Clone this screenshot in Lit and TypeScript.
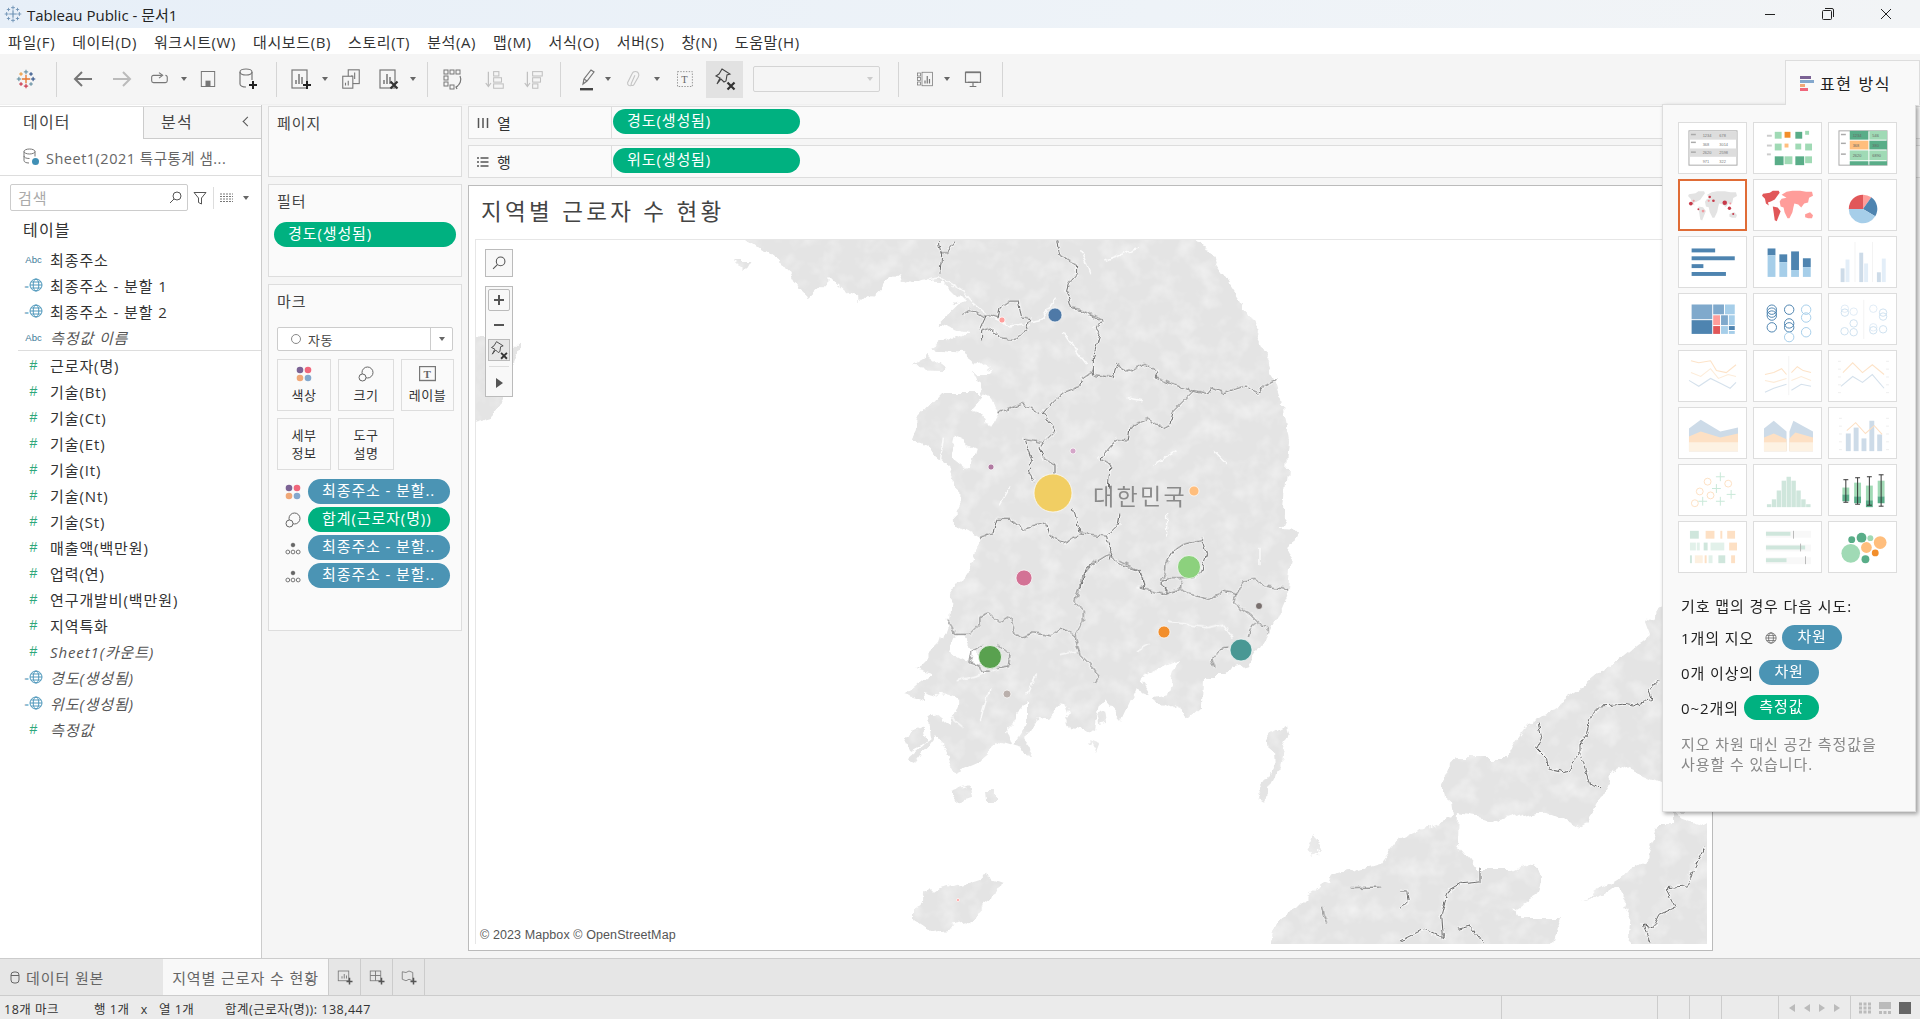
import { LitElement, html, svg, css } from "lit";
import { customElement } from "lit/decorators.js";

const BLUE = "#4e84b0";
const LBLUE = "#a6cee9";

// ---------- small icon helpers ----------
const plus = (x: number, y: number, s: number, c: string, w = 1.2) =>
  svg`<path d="M${x - s} ${y}H${x + s}M${x} ${y - s}V${y + s}" stroke=${c} stroke-width=${w} fill="none"/>`;

const logo = (size: number, muted = false) => {
  const c = (v: string) => (muted ? "#6f93b5" : v);
  return html`<svg width=${size} height=${size} viewBox="0 0 24 24">
    ${plus(12, 12, 5, c("#e8762d"), 1.6)}${plus(12, 3.5, 2.6, c("#5b879b"))}${plus(12, 20.5, 2.6, c("#c72037"))}
    ${plus(3.5, 12, 2.6, c("#59879b"))}${plus(20.5, 12, 2.6, c("#1f447e"))}${plus(6, 6, 2.2, c("#eb912b"))}
    ${plus(18, 6, 2.2, c("#1f447e"))}${plus(6, 18, 2.2, c("#c72037"))}${plus(18, 18, 2.2, c("#5b879b"))}
  </svg>`;
};

const ico = (w: number, body: unknown, stroke = "#777") => html`<svg width=${w} height=${w} viewBox="0 0 24 24" fill="none"
  stroke=${stroke} stroke-width="1.2">${body}</svg>`;

const chart = svg`<rect x="4" y="3" width="15" height="18"/><path d="M8 17v-4M11 17V7M14 17v-7" stroke-width="1.5"/>`;
const xmark = (x: number, y: number, s = 3.5) =>
  svg`<path d="M${x - s} ${y - s}L${x + s} ${y + s}M${x + s} ${y - s}L${x - s} ${y + s}" stroke="#333" stroke-width="2.2"/>`;
const pinPath = svg`<path d="M9 2l8 5-3 1 -1 6 -2 1 -3-3 -4 5 3-6 -4-2 3-2z" stroke="#444" stroke-width="1.1"/>`;

const icons: Record<string, unknown> = {
  back: ico(24, svg`<path d="M21 12H5M11 5l-7 7 7 7" stroke-width="2"/>`),
  fwd: ico(24, svg`<path d="M3 12h16M13 5l7 7-7 7" stroke-width="2"/>`, "#bbb"),
  redo: ico(22, svg`<path d="M15 8H6a2 2 0 0 0-2 2v4a2 2 0 0 0 2 2h13a2 2 0 0 0 2-2v-4a2 2 0 0 0-2-2"/><path d="M12 5l4 3-4 3"/>`),
  save: ico(20, svg`<rect x="4" y="3" width="16" height="18"/><rect x="9" y="14" width="6" height="7" fill="#777" stroke="none"/>`),
  newds: ico(24, svg`<ellipse cx="11" cy="5" rx="6" ry="3"/><path d="M5 5v12a6 3 0 0 0 6 3M17 5v8"/><path d="M18 14v8M14 18h8" stroke="#222" stroke-width="2"/>`),
  newsheet: ico(24, svg`${chart}<path d="M19 14v8M15 18h8" stroke="#222" stroke-width="2"/>`),
  dup: ico(22, svg`<rect x="9" y="2" width="12" height="15"/><path d="M13 12V8M16 12V5"/><rect x="3" y="9" width="11" height="13" fill="#f5f5f5"/><path d="M6 19v-3M9 19v-5"/>`),
  clear: ico(24, svg`${chart}${xmark(18, 18)}`),
  swap: ico(24, svg`<g fill="none" stroke="#777" stroke-width="1"><rect x="3" y="3" width="4" height="4"/><rect x="9" y="3" width="4" height="4"/><rect x="15" y="3" width="4" height="4"/><rect x="3" y="9" width="4" height="4"/><rect x="3" y="15" width="4" height="4"/><rect x="9" y="18" width="4" height="4"/></g><path d="M19 9c2 4 0 9-4 11M17 19l-2 1 1 2" stroke-width="1.2"/>`),
  sortA: ico(21, svg`<path d="M5 3v16M2 16l3 4 3-4" stroke="#c0c0c0" stroke-width="1.4"/><g stroke="#c0c0c0"><rect x="11" y="3" width="6" height="5"/><rect x="11" y="10" width="9" height="5"/><rect x="11" y="17" width="11" height="5"/></g>`),
  sortD: ico(21, svg`<path d="M5 3v16M2 16l3 4 3-4" stroke="#c0c0c0" stroke-width="1.4"/><g stroke="#c0c0c0"><rect x="11" y="3" width="11" height="5"/><rect x="11" y="10" width="9" height="5"/><rect x="11" y="17" width="6" height="5"/></g>`),
  hl: ico(24, svg`<path d="M8 17l1-5 7-9 3 2-7 9z"/><path d="M9 12l3 2"/><rect x="5" y="21" width="13" height="2.4" fill="#444" stroke="none"/>`),
  clip: ico(22, svg`<path d="M9 19c-2 1-4 0-4-3l5-10c1-3 6-3 7 0 1 2 0 3-1 5l-4 7c-1 2-4 1-3-1l4-9"/>`, "#c4c4c4"),
  text: html`<svg width="21" height="21" viewBox="0 0 24 24"><rect x="4" y="3" width="17" height="17" fill="none" stroke="#888" stroke-dasharray="1.6 1.6"/><text x="12.5" y="16" font-size="12" text-anchor="middle" fill="#666" font-family="Liberation Serif">T</text></svg>`,
  pin: ico(24, svg`${pinPath}${xmark(18, 19, 3.5)}`),
  cards: ico(22, svg`<g stroke-width="1"><rect x="2" y="4" width="4" height="4"/><rect x="2" y="10" width="4" height="4"/><rect x="2" y="16" width="4" height="4"/><rect x="8" y="3" width="14" height="18"/></g><path d="M12 18v-4M15 18V8M18 18v-6" stroke-width="1.6"/>`),
  present: ico(20, svg`<rect x="3" y="4" width="18" height="12" stroke-width="1.4"/><path d="M12 16v5M8 21h8M6 16h12" stroke-width="1.4"/><rect x="3" y="3" width="18" height="2" fill="#777" stroke="none"/>`),
};

const dd = html`<i class="dd"></i>`;
const sep = html`<i class="vsep"></i>`;
// each cell: width, content - widths add up to the icon positions in the toolbar
const toolbar: [number, unknown][] = [
  [52, logo(20)], [8, sep], [46, icons.back], [32, icons.fwd], [42, icons.redo], [8, dd], [40, icons.save],
  [38, icons.newds], [20, sep], [28, icons.newsheet], [22, dd], [30, icons.dup], [44, icons.clear], [6, dd],
  [22, sep], [30, icons.swap], [52, icons.sortA], [26, icons.sortD], [28, sep], [26, icons.hl], [16, dd],
  [36, icons.clip], [10, dd], [44, icons.text],
];

const globe = (c = "#3f8fb5", s = 14) => html`<svg width=${s} height=${s} viewBox="0 0 14 14" fill="none" stroke=${c} stroke-width=".9">
  <circle cx="7" cy="7" r="6"/><ellipse cx="7" cy="7" rx="2.8" ry="6"/><path d="M1 7h12M2 4h10M2 10h10"/></svg>`;

const sizeIcon = html`<svg width="16" height="16" viewBox="0 0 16 16" fill="none" stroke="#666"><circle cx="9.5" cy="6.5" r="5.5"/><circle cx="4.5" cy="11.5" r="3.5" fill="#fafafa"/></svg>`;
const colorIcon = html`<svg width="16" height="16" viewBox="0 0 16 16"><circle cx="4" cy="4" r="3.3" fill="#7b6294"/><circle cx="12" cy="4" r="3.3" fill="#f0677c"/><circle cx="4" cy="12" r="3.3" fill="#f0a878"/><circle cx="12" cy="12" r="3.3" fill="#84a8cd"/></svg>`;
const detailIcon = html`<svg width="16" height="14" viewBox="0 0 16 14" fill="none" stroke="#666" stroke-width=".9"><circle cx="8" cy="4" r="1.8" fill="#666"/><circle cx="2.8" cy="11" r="1.9"/><circle cx="8" cy="11" r="1.9"/><circle cx="13.2" cy="11" r="1.9"/></svg>`;

type Field = { name: string; kind: "abc" | "geo" | "num"; calc?: boolean };
const dims: Field[] = [
  { name: "최종주소", kind: "abc" },
  { name: "최종주소 - 분할 1", kind: "geo" },
  { name: "최종주소 - 분할 2", kind: "geo" },
  { name: "측정값 이름", kind: "abc", calc: true },
];
const measures: Field[] = [
  { name: "근로자(명)", kind: "num" }, { name: "기술(Bt)", kind: "num" }, { name: "기술(Ct)", kind: "num" },
  { name: "기술(Et)", kind: "num" }, { name: "기술(It)", kind: "num" }, { name: "기술(Nt)", kind: "num" },
  { name: "기술(St)", kind: "num" }, { name: "매출액(백만원)", kind: "num" }, { name: "업력(연)", kind: "num" },
  { name: "연구개발비(백만원)", kind: "num" }, { name: "지역특화", kind: "num" },
  { name: "Sheet1(카운트)", kind: "num", calc: true }, { name: "경도(생성됨)", kind: "geo", calc: true },
  { name: "위도(생성됨)", kind: "geo", calc: true }, { name: "측정값", kind: "num", calc: true },
];

const fieldIcon = (k: Field["kind"]) =>
  k === "abc" ? html`<span class="abc">Abc</span>` : k === "geo" ? html`<span class="geo"><b>=</b>${globe()}</span>` : html`<span class="num">#</span>`;

// ---------- show me thumbnails (68 x 51 boxes) ----------
const r = (x: number, y: number, w: number, h: number, c: string) => svg`<rect x=${x} y=${y} width=${w} height=${h} fill=${c}/>`;
const world = (a: string, b: string) => svg`
  <path fill=${a} d="M9 14l7-1 3-2 6 0 1 2-3 4-2 3-4 2-3 1 1 3-3-2-1-5-3-3z"/>
  <path fill=${a} d="M19 27l5 1 3 4-2 5-2 5-2-1-1-7z"/>
  <path fill=${b} d="M28 15l5-3 6-1 8 0 6 1 6 0 1 4-4 2-1 5-4 1-3 4-3-3-4-1-1 4-1 5-3 6-2 0-3-6-1-5-3-1-1-5 2-3 5-1z"/>
  <path fill=${b} d="M52 35l5-2 3 3-1 3-4 0-3-1z"/>`;
const lineSet = (...l: [string, string][]) => l.map(([d, c]) => svg`<polyline points=${d} fill="none" stroke=${c} stroke-width="1.1"/>`);

const thumbs: unknown[] = [
  // text table
  svg`<rect x="10" y="8" width="49" height="35" fill="#fff" stroke="#aaa"/>${r(10.5, 8.5, 48, 8.5, "#ddd")}${r(10.5, 26, 48, 8.5, "#ddd")}
    ${r(12, 11, 5, 1.5, "#aaa")}${r(12, 19, 5, 1.5, "#aaa")}${r(12, 29, 5, 1.5, "#aaa")}
    <g font-size="4" fill="#777" font-family="Liberation Sans"><text x="24" y="14.5">1234</text><text x="41" y="14.5">678</text><text x="24" y="23">368</text><text x="41" y="23">3014</text><text x="24" y="32">2620</text><text x="41" y="32">2598</text><text x="24" y="41">971</text><text x="41" y="41">322</text></g>`,
  // heat map
  svg`${r(13, 12, 5, 2, "#ccc")}${r(13, 22, 5, 2, "#ccc")}${r(13, 31, 4, 2, "#ccc")}
    ${r(21, 9, 7, 7, "#a0dab5")}${r(31, 9, 6, 6, "#f28e2b")}${r(42, 9, 7, 7, "#59ad88")}${r(52, 8, 4, 4, "#a0dab5")}
    ${r(21, 21, 7, 7, "#a0dab5")}${r(31, 21, 4, 4, "#ffbe7d")}${r(42, 21, 6, 6, "#a0dab5")}${r(52, 21, 7, 7, "#a0dab5")}
    ${r(21, 34, 9, 9, "#59ad88")}${r(31, 34, 8, 8, "#a0dab5")}${r(42, 34, 9, 9, "#59ad88")}${r(52, 34, 7, 7, "#a0dab5")}`,
  // highlight table
  svg`<rect x="10" y="8" width="49" height="35" fill="#fff" stroke="#aaa"/>${r(12, 11, 5, 1.5, "#aaa")}${r(12, 20, 5, 1.5, "#aaa")}${r(12, 31, 5, 1.5, "#aaa")}
    ${r(21, 8, 19, 9, "#59ad88")}${r(41, 8, 18, 9, "#a0dab5")}${r(21, 18, 19, 9, "#ffbe7d")}${r(41, 18, 18, 9, "#59ad88")}
    ${r(21, 28, 19, 10, "#a0dab5")}${r(41, 28, 18, 10, "#a0dab5")}${r(21, 39, 19, 4, "#59ad88")}${r(41, 39, 18, 4, "#59ad88")}
    <g font-size="4" fill="#666" font-family="Liberation Sans"><text x="24" y="14">1234</text><text x="44" y="14">546</text><text x="24" y="24">368</text><text x="44" y="24">380</text><text x="24" y="35">2620</text><text x="44" y="35">6890</text></g>`,
  // symbol map
  svg`${world("#e3e3e3", "#e3e3e3")}<g fill="#c73a4a"><circle cx="11" cy="24" r="2"/><circle cx="47" cy="23" r="2.4"/><circle cx="52" cy="29" r="1.8"/><circle cx="31" cy="17" r="1.4"/><circle cx="35" cy="21" r="1.4"/><circle cx="19" cy="30" r="1"/><circle cx="56" cy="35" r="1.1"/></g>
    <g fill="#ef9a9f"><circle cx="14" cy="21" r="1.2"/><circle cx="24" cy="32" r="1.5"/><circle cx="30" cy="21" r="1.2"/><circle cx="53" cy="24" r="1.1"/></g>`,
  // filled map
  world("#e15759", "#ff9d9a"),
  // pie
  svg`<path d="M34.5 15A14.5 14.5 0 0 0 20 29.5H34.5z" fill="#e15759"/>
    <path d="M34.5 15A14.5 14.5 0 0 1 43 17.7L34.5 29.5z" fill="#ff9d9a"/>
    <path d="M43 17.7A14.5 14.5 0 0 1 47 37L34.5 29.5z" fill=${BLUE}/>
    <path d="M47 37A14.5 14.5 0 0 1 20 29.5H34.5z" fill=${LBLUE}/>`,
  // horizontal bars
  svg`${r(12.7, 11.7, 24, 4, BLUE)}${r(12.7, 19.7, 44, 4, BLUE)}${r(12.7, 27.7, 12, 4, BLUE)}${r(12.7, 35.7, 35, 4, BLUE)}`,
  // stacked bars
  svg`${[[13.7, 11.7, 18.7], [25.7, 17.7, 25.7], [37.7, 14.7, 33.7], [49.7, 21.7, 30.7]].map(([x, t, m]) => svg`${r(x, t, 8, m - t, BLUE)}${r(x, m, 8, 40.7 - m, LBLUE)}`)}`,
  // side by side bars
  svg`${r(26, 5, .7, 41, "#eee")}${r(44, 5, .7, 41, "#eee")}
    ${r(11.7, 32, 4, 14, "#cddbe8")}${r(16.7, 23, 4, 23, "#e3eef8")}${r(30.7, 16, 4, 30, "#cddbe8")}${r(35.7, 27, 4, 19, "#e3eef8")}${r(48.7, 36, 4, 10, "#cddbe8")}${r(53.7, 22, 4, 24, "#e3eef8")}`,
  // treemap
  svg`${r(12.7, 10.7, 21, 15, "#7fa9cc")}${r(12.7, 26.7, 21, 14, BLUE)}${r(34.7, 10.7, 11, 10, "#7fa9cc")}${r(46.7, 10.7, 10, 10, LBLUE)}
    ${r(34.7, 21.7, 7, 10, "#ff9d9a")}${r(42.7, 21.7, 7, 10, "#7fa9cc")}${r(50.7, 21.7, 6, 10, LBLUE)}${r(34.7, 32.7, 7, 8, "#e15759")}
    ${r(42.7, 32.7, 7, 8, LBLUE)}${r(50.7, 32.7, 6, 4, BLUE)}${r(50.7, 37.7, 6, 3, LBLUE)}`,
  // circle view
  svg`<g fill="none" stroke-width="1">${[[18, 16], [18, 19], [18, 22], [18, 34], [35.7, 16], [35.7, 30], [35.7, 34]].map(([x, y]) => svg`<circle cx=${x} cy=${y} r="4.8" stroke=${BLUE}/>`)}
    ${[[53, 16], [53, 24], [53, 39], [35.7, 44]].map(([x, y]) => svg`<circle cx=${x} cy=${y} r="4.8" stroke=${LBLUE}/>`)}</g>`,
  // side by side circles
  svg`<g fill="none" stroke-width="1">${[[16, 15], [16, 19], [15.7, 38], [25, 18], [25, 30], [25, 39], [45, 15], [55, 19], [55, 23], [45, 34], [45, 37], [55, 36]].map(([x, y], i) => svg`<circle cx=${x} cy=${y} r="3.8" stroke=${i % 3 ? "#cfe1f0" : "#e0ecf6"}/>`)}</g>${r(35, 6, .7, 40, "#eee")}`,
  // lines
  svg`${lineSet(["12,10 20,12 32,10 38,20 48,22 58,14", "#fde3c8"], ["12,22 22,26 32,18 40,28 50,24 58,26", "#fdecd9"], ["10,30 20,36 32,28 44,34 52,38 58,32", "#d5e1ec"])}`,
  svg`${r(35, 5, .7, 40, "#eee")}${lineSet(["11,24 20,22 28,18 33,24", "#fde3c8"], ["38,22 44,16 50,20 58,22", "#fde3c8"], ["11,30 20,32 33,28", "#fdecd9"], ["38,30 48,26 58,30", "#fdecd9"], ["11,42 20,38 33,34", "#d5e1ec"], ["38,40 48,34 58,36", "#d5e1ec"])}`,
  svg`${lineSet(["14,22 24,12 34,22 44,14 56,24", "#fde3c8"], ["12,36 24,26 34,32 44,24 56,38", "#d5e1ec"])}<g fill="#eee">${[10, 18, 26, 34, 42].map((y) => svg`${r(9, y, 3, 1, "#eee")}${r(58, y, 3, 1, "#eee")}`)}</g>`,
  // areas
  svg`<polygon points="10,21 22,12 42,24 60,20 60,44 10,44" fill="#cddbe8"/><polygon points="10,29 22,24 42,30 60,26 60,44 10,44" fill="#fde0c4"/><polygon points="10,35 60,35 60,44 10,44" fill="#fdf2e3"/>`,
  svg`<polygon points="10,21 20,13 33,24 33,44 10,44" fill="#cddbe8"/><polygon points="10,30 20,26 33,32 33,44 10,44" fill="#fde0c4"/><polygon points="10,35 33,35 33,44 10,44" fill="#fdf2e3"/>
    <polygon points="36,24 40,13 60,24 60,44 36,44" fill="#cddbe8"/><polygon points="36,31 42,25 60,30 60,44 36,44" fill="#fde0c4"/><polygon points="36,35 60,35 60,44 36,44" fill="#fdf2e3"/>`,
  svg`${r(17, 26, 5, 18, "#cddbe8")}${r(25, 20, 5, 24, "#cddbe8")}${r(33, 31, 5, 13, "#cddbe8")}${r(41, 13, 5, 31, "#cddbe8")}${r(49, 27, 5, 17, "#cddbe8")}
    ${lineSet(["18,23 27,15 37,26 46,18 54,27", "#fde0c4"])}${[10, 18, 26, 34, 42].map((y) => svg`${r(10, y, 3, 1, "#eee")}${r(58, y, 3, 1, "#eee")}`)}`,
  // scatter
  svg`<g fill="none" stroke-width="1"><g stroke="#fde0c4">${[[29, 17], [21, 27], [16, 39], [32, 31], [50, 19]].map(([x, y]) => svg`<circle cx=${x} cy=${y} r="3.5"/>`)}</g>
    <g stroke="#c9e8d8">${[[42, 12], [38, 24], [24, 37], [42, 37], [53, 30]].map(([x, y]) => svg`<path d="M${x - 4.5} ${y}h9M${x} ${y - 4.5}v9"/>`)}</g></g>`,
  // histogram
  svg`${[[13, 3], [18, 8], [23, 17], [28, 27], [33, 31], [38, 27], [43, 17], [48, 8], [53, 3]].map(([x, h]) => svg`${r(x, 43 - h, 4.5, h, "#cfe6dc")}`)}`,
  // box plot
  svg`${[[17, 15, 38, 23, 30], [29, 13, 40, 18, 32], [41, 12, 41, 21, 36], [53, 10, 42, 16, 32]].map(([x, t, b, a, m]) => svg`
    ${r(x - 3.5, a, 7, m - a, "#a0dab5")}${r(x - 3.5, m, 7, 7, "#59ad88")}<path d="M${x} ${t}V${b}M${x - 2.5} ${t}h5M${x - 2.5} ${b}h5" stroke="#333" fill="none"/>`)}`,
  // gantt
  svg`${r(11, 9, 9, 8, "#cfe6dc")}${r(27, 9, 9, 8, "#fde0c4")}${r(42, 9, 2, 8, "#fde0c4")}${r(49, 9, 8, 8, "#fde0c4")}
    ${r(11, 21, 6, 8, "#e2f1ea")}${r(18, 21, 3, 8, "#e2f1ea")}${r(25, 21, 4, 8, "#cfe6dc")}${r(32, 21, 14, 8, "#e2f1ea")}${r(51, 21, 8, 8, "#fde0c4")}
    ${r(11, 34, 2, 8, "#cfe6dc")}${r(16, 34, 8, 8, "#fdf0e0")}${r(26, 34, 2, 8, "#fde0c4")}${r(30, 34, 4, 8, "#e2f1ea")}${r(40, 34, 7, 8, "#cfe6dc")}${r(53, 34, 4, 8, "#fde0c4")}`,
  // bullet
  svg`${r(12, 9, 46, 7, "#f8f8f8")}${r(12, 23, 46, 7, "#f8f8f8")}${r(12, 36, 46, 7, "#f8f8f8")}${r(12, 10, 25, 4, "#cfe6dc")}${r(12, 24, 40, 4, "#cfe6dc")}${r(12, 37, 21, 4, "#cfe6dc")}
    ${r(39.7, 9, .8, 8, "#aaa")}${r(47, 22, .8, 8, "#aaa")}${r(52, 35, .8, 8, "#aaa")}`,
  // packed bubbles
  svg`<circle cx="22" cy="32" r="9.5" fill="#a0dab5"/><circle cx="23" cy="18" r="3.5" fill="#59ad88"/><circle cx="33" cy="16" r="5" fill="#59ad88"/><circle cx="42" cy="16.5" r="3" fill="#a0dab5"/>
    <circle cx="38" cy="26" r="5.5" fill="#ffbe7d"/><circle cx="52" cy="21" r="6.5" fill="#ffbe7d"/><circle cx="47" cy="31.5" r="3.5" fill="#f28e2b"/><circle cx="37" cy="38" r="4" fill="#59ad88"/>`,
];
// the ones tableau greys out have their colours already pale; index 3 is the active one
const ACTIVE = 3;

// ---------- map data, traced from the picture ----------
const land = [
  // korea
  "745,225 1190,225 1240,300 1270,360 1283,400 1289,440 1284,510 1280,527 1298,528 1290,560 1286,595 1268,637 1250,665 1225,672 1205,672 1204,705 1190,718 1178,708 1160,700 1135,690 1122,718 1102,695 1095,732 1072,728 1063,700 1047,718 1035,716 1022,738 1035,755 1000,745 980,762 957,772 935,735 915,762 907,758 930,738 928,718 942,706 905,695 935,670 915,665 940,640 948,617 950,593 972,560 982,537 958,523 957,480 947,463 915,437 920,417 943,393 982,393 973,367 908,365 968,330 938,320 957,303 905,280 900,270 880,285 860,303 830,277 806,300 790,268 750,240",
  // china edge
  "465,340 522,342 503,397 490,417 465,424",
  // small islands
  "733,258 752,258 745,270", "950,793 970,786 972,796 955,800", "988,787 998,787 998,797 989,797",
  "1088,738 1098,742 1095,750", "905,735 920,728 925,742 910,750", "1098,716 1108,712 1110,724 1100,726",
  // jeju
  "915,907 933,890 980,875 1000,882 993,903 967,922 930,930 915,920",
  // tsushima
  "1287,720 1270,730 1273,767 1255,797 1263,800 1277,773 1289,733",
  "1313,837 1323,847 1313,853 1308,847",
  // japan
  "1665,605 1645,620 1650,633 1617,660 1580,690 1530,723 1507,757 1457,757 1443,770 1450,817 1423,827 1400,837 1380,863 1333,877 1307,893 1280,920 1268,955 1725,955 1725,605",
];
const sea = [
  "1458,812 1500,820 1540,808 1587,828 1597,800 1620,763 1670,785 1670,823 1660,823 1647,860 1580,900 1617,887 1633,910 1630,955 1548,955 1560,917 1523,917 1517,907 1540,893 1543,877 1533,860 1513,870 1480,870 1457,843",
  "1672,812 1712,828 1712,812",
  // inlets along the korean coast
  "905,280 945,280 965,300 935,310", "915,345 960,350 990,372 950,372", "985,393 1000,412 990,428 975,405", "955,435 975,445 968,470 950,455",
  "958,630 985,660 975,665 950,650", "925,690 960,700 950,725 930,710", "1005,725 1030,700 1030,718 1012,745", "1140,680 1180,660 1170,690 1150,695",
];
const rivers7 = [
  "0,170 60,150 120,140 190,180 215,210 260,250 330,285 420,270 470,200", "490,300 530,360 560,400", "290,545 260,500",
  "130,620 120,700 150,760", "680,500 730,510", "760,700 830,660", "940,660 980,700", "300,820 330,770", "610,90 720,50", "545,60 570,130",
  "800,850 800,920", "1080,950 1080,1000",
];
const rivers8 = [
  "170,360 240,340 300,320", "410,340 380,400", "800,180 920,200 970,190 1000,230", "710,270 750,250", "480,280 530,270",
  "120,440 190,500", "270,380 240,480",
];
const borders7 = [
  "470,30 480,70 530,100 530,130 505,160 500,180 515,230 540,235 610,270 585,290 600,310 580,380 580,430 640,440 650,400 680,420 735,400 775,420 765,440 820,460 880,480 920,490 935,470 970,485 1035,465 1075,490 1090,465 1130,445",
  "115,30 125,70 120,125", "165,35 140,65 120,65",
  "187,250 210,235 250,260 265,250 295,260 300,230 330,210 355,210 365,260 390,265 380,295 345,325 300,320 270,290 245,300 245,325", "240,295 260,250",
  "580,420 545,445 540,465 490,485 460,510 430,545 465,600 430,635 420,650 430,680 465,700 465,730", "295,545 365,520 420,545",
  "430,635 375,625 385,660 395,690 385,720 405,750", "520,830 540,905",
  "880,480 820,540 810,580 790,590 745,565 690,585 685,630 650,625 620,660 600,680 630,700 625,770", "660,850 655,880 620,915 570,910 540,905",
  "240,920 280,905 290,865 330,865 370,895 440,875 450,915 490,935 535,915", "620,915 630,965 625,985",
  "625,970 560,1010 540,1080", "625,970 660,1000 720,1020 735,1075",
  "800,990 820,960 850,940 905,925 920,970 905,1020 880,1040 840,1040 800,1040 785,1060 800,1080",
];
const borders8 = [
  "580,0 550,40 545,60 525,120 550,150 550,180 525,225", "660,0 720,30 735,75 720,80 790,100 840,85 845,60",
  "800,0 795,40 785,60 800,100", "845,80 870,100 930,115 970,90 1010,100 1000,125 1050,160 1075,185 1050,205 1045,230",
  "1010,100 1030,60 1065,55 1095,75 1160,85", "1075,190 1095,195 1105,215", "985,260 960,265 950,285 935,290 945,320",
  "140,175 155,195 165,220 210,220 240,190 240,165 265,155 300,185 330,165 345,220 365,230 400,215 455,225 480,205 500,205 525,225 540,280 585,325 595,350 585,365",
  "245,250 215,270 210,305 240,315 245,330 270,330", "295,250 330,280 325,315 290,320",
  "1355,980 1440,978", "1265,1035 1270,1060 1280,1085",
];
const borders10 = [
  "780,355 745,390 755,415 700,435 670,430 605,435 570,470 560,520 540,550 540,580 555,625 570,670 600,680",
  "415,485 425,530 410,560 440,590 445,625 490,635 510,630 525,590 540,570",
  "0,1140 70,1105 130,1130 125,1060 135,1020 150,985 185,965 240,960 240,920",
  "0,1045 25,1020 20,990 0,990", "175,1105 210,1095 250,1145",
  "750,1145 730,1095 760,1100 780,1060 825,1040 800,990 800,980 860,975 880,930 915,860",
];
const marks: [number, number, number, string][] = [
  [1053, 492, 19, "#f1ce63"], [1055, 314, 7, "#4e79a7"], [1002, 319, 3, "#ff9d9a"], [1073, 450, 3, "#d4a6c8"],
  [991, 466, 3, "#b07aa1"], [1194, 490, 5, "#ffbe7d"], [1189, 566, 11.5, "#8cd17d"], [1024, 577, 8, "#d37295"],
  [1259, 605, 3.5, "#79706e"], [1164, 631, 6, "#f28e2b"], [1241, 649, 11, "#499894"], [990, 656, 11.5, "#59a14f"],
  [1007, 693, 4, "#bab0ac"], [958, 899, 1.5, "#ff9d9a"],
];
const lines = (ls: string[], ox: number, oy: number) =>
  svg`<g transform="translate(${ox} ${oy}) scale(.3333)">${ls.map((p) => svg`<polyline points=${p} vector-effect="non-scaling-stroke"/>`)}</g>`;

@customElement("app-root")
export class AppRoot extends LitElement {
  static styles = css`
    :host {
      display: flex; flex-direction: column; position: relative; width: 1920px; height: 1019px; overflow: hidden;
      font-family: "Open Sans", "Noto Sans CJK KR", sans-serif; font-size: 15px; letter-spacing: .9px; color: #444; background: #f5f5f5;
    }
    .titlebar { height: 28px; display: flex; align-items: center; background: linear-gradient(90deg, #e7eff8, #eef3f8 60%, #f2f4f6); color: #222; flex: none; letter-spacing: 0; padding-right: 5px; }
    .titlebar .logo { width: 18px; height: 18px; margin: 0 5px 0 4px; display: flex; }
    .titlebar .name { flex: 1; }
    .winbtn { width: 58px; display: flex; justify-content: center; }
    .menubar { height: 26px; background: #fff; display: flex; align-items: center; padding-left: 8px; gap: 17px; color: #333; flex: none; letter-spacing: .6px; }
    .toolbar { height: 50px; display: flex; align-items: center; background: #f5f5f5; border-bottom: 1px solid #f0f0f0; flex: none; }
    .cell { display: flex; justify-content: center; align-items: center; height: 37px; flex: none; }
    .cell.on { background: #e2e2e2; }
    .combo { width: 127px; height: 26px; margin: 0 0 0 10px; border: 1px solid #d4d4d4; border-radius: 2px; box-sizing: border-box; position: relative; flex: none; }
    .combo .dd { position: absolute; right: 6px; top: 10px; border-top-color: #ccc; }
    .dd { display: block; width: 0; height: 0; border: 3px solid transparent; border-top: 4px solid #666; border-bottom: 0; }
    .vsep { display: block; width: 1px; height: 35px; background: #d5d5d5; }
    .main { height: 853px; display: flex; flex: none; }

    .data { width: 261px; background: #fff; border-right: 1px solid #ccc; flex: none; }
    .dtabs { display: flex; height: 33px; margin-top: 1px; border-top: 1px solid #ddd; box-sizing: border-box; }
    .dtab { width: 143px; font-size: 16px; letter-spacing: 1.2px; padding-left: 23px; box-sizing: border-box; line-height: 30px; }
    .dtab.off { flex: 1; background: #f5f5f5; border-left: 1px solid #ccc; border-bottom: 1px solid #ccc; padding-left: 17px; display: flex; justify-content: space-between; }
    .chev { width: 6px; height: 6px; border-left: 1px solid #555; border-bottom: 1px solid #555; transform: rotate(45deg); margin: 11px 10px 0 0; }
    .source { height: 37px; display: flex; align-items: center; gap: 6px; padding-left: 23px; border-bottom: 1px solid #ddd; box-sizing: border-box; color: #666; font-size: 14.5px; letter-spacing: .5px; white-space: nowrap; }
    .searchrow { display: flex; align-items: center; padding: 8px 0 0 10px; height: 27px; }
    .search { width: 178px; height: 27px; border: 1px solid #ccc; border-radius: 2px; box-sizing: border-box; display: flex; align-items: center; justify-content: space-between; padding: 0 5px 0 7px; color: #aaa; }
    .searchrow .vb { width: 1px; height: 22px; background: #ddd; margin: 0 6px; }
    .tblhead { font-size: 16px; letter-spacing: 1.2px; padding: 7px 0 4px 23px; line-height: 24px; color: #333; }
    .field { height: 26px; display: flex; align-items: center; padding-left: 23px; color: #333; white-space: nowrap; }
    .field .ic { width: 27px; flex: none; display: flex; justify-content: center; margin-left: -3px; margin-right: 3px; letter-spacing: 0; }
    .field.calc .nm { font-style: italic; color: #555; }
    .divider { height: 1px; background: #ddd; margin: 0 0 1px 18px; }
    .abc { font-size: 9.5px; color: #3c7a98; font-family: "Liberation Sans", sans-serif; }
    .geo { display: flex; align-items: center; }
    .geo b { font-size: 8px; color: #3f8fb5; font-weight: 400; }
    .num { color: #2ea77a; font-family: "Liberation Sans", sans-serif; font-size: 14px; }

    .cards { width: 194px; margin-left: 6px; display: flex; flex-direction: column; gap: 7px; padding-top: 1px; flex: none; }
    .card { background: #fafafa; border: 1px solid #ddd; box-sizing: border-box; padding: 6px 8px; color: #444; }
    .card h4 { margin: 0; font-weight: 400; font-size: 15px; line-height: 20px; }
    .pill { height: 25px; border-radius: 13px; color: #fff; line-height: 22px; padding-left: 14px; box-sizing: border-box; white-space: nowrap; overflow: hidden; }
    .pill.g { background: #00b180; }
    .pill.b { background: #4b94b4; }
    .filter .pill { margin: 11px -3px 0 -3px; }
    .mkcombo { height: 24px; margin-top: 16px; border: 1px solid #ccc; border-radius: 2px; background: #fff; display: flex; align-items: center; box-sizing: border-box; padding-left: 13px; gap: 7px; font-size: 13px; letter-spacing: .6px; }
    .ring { width: 8px; height: 8px; border: 1px solid #888; border-radius: 50%; }
    .mkcombo .end { margin-left: auto; width: 21px; height: 100%; border-left: 1px solid #ccc; display: flex; align-items: center; justify-content: center; }
    .mkbtns { display: grid; grid-template-columns: 54px 56px 53px; grid-auto-rows: 52px; gap: 7px; margin-top: 8px; }
    .mkbtn { border: 1px solid #ddd; display: flex; flex-direction: column; align-items: center; justify-content: center; font-size: 13px; letter-spacing: .6px; line-height: 18px; color: #333; text-align: center; background: #fafafa; }
    .mkbtn svg { margin-bottom: 4px; }
    .mkpills { margin-top: 9px; display: flex; flex-direction: column; gap: 3px; }
    .mkrow { display: flex; align-items: center; }
    .mkrow .slot { width: 31px; display: flex; justify-content: center; }
    .mkrow .pill { width: 142px; }

    .work { flex: 1; margin-left: 6px; display: flex; flex-direction: column; min-width: 0; padding-top: 1px; }
    .shelf { height: 33px; margin-bottom: 6px; border: 1px solid #ddd; border-right: 0; background: #fafafa; display: flex; box-sizing: border-box; }
    .shelf .lab { width: 143px; display: flex; align-items: center; gap: 8px; padding-left: 8px; border-right: 1px solid #ddd; box-sizing: border-box; flex: none; color: #333; }
    .shelf .pill { width: 187px; margin: 2px 0 0 1px; }
    .view { width: 1245px; height: 766px; margin-top: 1px; background: #fff; border: 1px solid #bbb; box-sizing: border-box; padding: 0 5px 6px 6px; display: flex; flex-direction: column; }
    .vtitle { font-size: 22.5px; height: 53px; line-height: 52px; padding-left: 6px; color: #444; letter-spacing: 3.3px; flex: none; }
    .mapbox { flex: 1; border-top: 1px solid #e6e6e6; border-left: 1px solid #e6e6e6; position: relative; overflow: hidden; }
    .mapbox svg.map { display: block; letter-spacing: 0; }
    .copy { position: absolute; left: 4px; bottom: 2px; font: 12.5px "Liberation Sans", sans-serif; letter-spacing: .1px; color: #555; }
    .mapctl { position: absolute; left: 9px; top: 9px; display: flex; flex-direction: column; gap: 9px; color: #555; }
    .ctlbox { width: 28px; border: 1px solid #bbb; background: #f8f8f8; box-sizing: border-box; display: flex; flex-direction: column; align-items: center; }
    .ctlbox.s { height: 28px; justify-content: center; }
    .ctlbox.g { height: 111px; padding-top: 2px; }
    .cb { width: 22px; height: 22px; box-sizing: border-box; display: flex; align-items: center; justify-content: center; flex: none; }
    .cb.bd { border: 1px solid #bbb; border-radius: 2px; }
    .cb.act { border: 1px solid #bbb; background: #e6e6e6; }
    .ctlbox hr { width: 20px; border: 0; border-top: 1px solid #ddd; margin: 5px 0 5px; }
    .play { width: 0; height: 0; border: 5px solid transparent; border-left: 7px solid #555; border-right: 0; margin-top: 6px; }

    .tabs { height: 37px; border-top: 1px solid #ccc; box-sizing: border-box; background: #e6e6e6; display: flex; flex: none; color: #666; }
    .tab { display: flex; align-items: center; height: 100%; box-sizing: border-box; white-space: nowrap; }
    .tab.ds { width: 163px; padding-left: 10px; gap: 6px; }
    .tab.on { width: 166px; background: #f8f8f8; justify-content: center; border-right: 1px solid #ccc; }
    .tab.add { width: 32px; justify-content: center; border-right: 1px solid #ccc; }
    .status { height: 25px; background: #ebebeb; border-top: 1px solid #ccc; box-sizing: border-box; display: flex; align-items: center; font-size: 12.5px; letter-spacing: .5px; color: #333; flex: none; position: relative; }
    .status span { flex: none; white-space: nowrap; }
    .stcell { height: 100%; border-left: 1px solid #ccc; box-sizing: border-box; flex: none; display: flex; align-items: center; justify-content: space-around; }
    .nav { width: 0; height: 0; border: 4px solid transparent; border-right: 6px solid #bbb; border-left: 0; }
    .nav.r { border-left: 6px solid #bbb; border-right: 0; }

    .showme { position: absolute; right: 0; top: 60px; width: 258px; display: flex; flex-direction: column; align-items: flex-end; }
    .smtab { width: 135px; height: 45px; background: #f9f9f9; border: 1px solid #ddd; border-bottom: 0; box-sizing: border-box; display: flex; align-items: center; gap: 6px; padding-left: 14px; font-size: 16px; letter-spacing: 1.6px; color: #222; margin-bottom: -1px; position: relative; z-index: 1; }
    .smbody { width: 254px; height: 708px; margin-right: 4px; background: #f9f9f9; border: 1px solid #ddd; box-sizing: border-box; box-shadow: 2px 2px 4px rgba(0, 0, 0, .35); padding: 17px 0 0 15px; color: #222; }
    .smgrid { display: grid; grid-template-columns: repeat(3, 69px); grid-auto-rows: 52px; column-gap: 6px; row-gap: 5px; }
    .thumb { border: 1px solid #ddd; background: #fff; box-sizing: border-box; }
    .thumb.sel { border: 2px solid #e06c36; }
    .thumb svg { display: block; width: 100%; height: 100%; letter-spacing: 0; }
    .smhead { margin: 22px 0 -2px 3px; line-height: 22px; white-space: nowrap; }
    .smrow { display: flex; align-items: center; margin: 10px 0 0 3px; height: 25px; white-space: nowrap; gap: 5px; }
    .smrow .pill { text-align: center; padding: 0; }
    .smrow svg { margin-left: 6px; }
    .smnote { margin: 14px 0 0 3px; color: #888; line-height: 20px; white-space: nowrap; }
  `;

  private field(f: Field) {
    return html`<div class="field ${f.calc ? "calc" : ""}"><span class="ic">${fieldIcon(f.kind)}</span><span class="nm">${f.name}</span></div>`;
  }

  private map() {
    return html`<svg class="map" width="1231" height="704" viewBox="476 239 1231 704">
      <defs>
        <filter id="coast" filterUnits="userSpaceOnUse" x="440" y="200" width="1300" height="780" color-interpolation-filters="sRGB">
          <feTurbulence type="fractalNoise" baseFrequency=".045" numOctaves="4" seed="4" result="n"/>
          <feDisplacementMap in="SourceGraphic" in2="n" scale="18" xChannelSelector="R" yChannelSelector="G" result="d"/>
          <feTurbulence type="fractalNoise" baseFrequency=".05" numOctaves="3" seed="11" result="n2"/>
          <feColorMatrix in="n2" type="matrix" values="0 0 0 0 1  0 0 0 0 1  0 0 0 0 1  .9 0 0 0 -.38" result="spots"/>
          <feComposite in="spots" in2="d" operator="in" result="s"/>
          <feMerge><feMergeNode in="d"/><feMergeNode in="s"/></feMerge>
        </filter>
        <filter id="shore" filterUnits="userSpaceOnUse" x="440" y="200" width="1300" height="780">
          <feTurbulence type="fractalNoise" baseFrequency=".05" numOctaves="4" seed="4"/>
          <feDisplacementMap in="SourceGraphic" scale="16" xChannelSelector="R" yChannelSelector="G"/>
        </filter>
        <filter id="wob" filterUnits="userSpaceOnUse" x="440" y="200" width="1300" height="780">
          <feTurbulence type="fractalNoise" baseFrequency=".14" numOctaves="2" seed="7"/>
          <feDisplacementMap in="SourceGraphic" scale="6" xChannelSelector="R" yChannelSelector="G"/>
        </filter>
      </defs>
      <g fill="#e4e4e4" filter="url(#coast)">${land.map((p) => svg`<polygon points=${p}/>`)}</g>
      <g fill="#fff" filter="url(#shore)">${sea.map((p) => svg`<polygon points=${p}/>`)}</g>
      <g fill="none" stroke="#fff" stroke-opacity=".8" stroke-width="1.5" filter="url(#wob)">${lines(rivers7, 900, 230)}${lines(rivers8, 900, 560)}</g>
      <g fill="none" filter="url(#wob)">
        <g stroke="#fff" stroke-opacity=".6" stroke-width="3">${lines(borders7, 900, 230)}${lines(borders8, 900, 560)}${lines(borders10, 1400, 560)}</g>
        <g stroke="#6a6a6a" stroke-width="1">${lines(borders7, 900, 230)}${lines(borders8, 900, 560)}${lines(borders10, 1400, 560)}</g>
      </g>
      <text x="1093" y="504" font-size="23" fill="#8a8a8a" letter-spacing="2.3">대한민국</text>
      ${marks.map(([x, y, rad, c]) => svg`<circle cx=${x} cy=${y} r=${rad} fill=${c} stroke="#fff" stroke-opacity=".7"/>`)}
    </svg>`;
  }

  render() {
    const pill = "최종주소 - 분할..";
    return html`
      <div class="titlebar">
        <span class="logo">${logo(18, true)}</span>
        <span class="name">Tableau Public - 문서1</span>
        <span class="winbtn"><svg width="12" height="12"><path d="M1 6.5h10" stroke="#222"/></svg></span>
        <span class="winbtn"><svg width="12" height="12" fill="none" stroke="#222"><rect x=".5" y="2.5" width="9" height="9" rx="1"/><path d="M3 .5h7a1.5 1.5 0 0 1 1.5 1.5v7"/></svg></span>
        <span class="winbtn"><svg width="12" height="12"><path d="M1 1l10 10M11 1L1 11" stroke="#222"/></svg></span>
      </div>
      <div class="menubar">
        ${["파일(F)", "데이터(D)", "워크시트(W)", "대시보드(B)", "스토리(T)", "분석(A)", "맵(M)", "서식(O)", "서버(S)", "창(N)", "도움말(H)"].map((m) => html`<span>${m}</span>`)}
      </div>
      <div class="toolbar">
        ${toolbar.map(([w, c]) => html`<div class="cell" style="width:${w}px">${c}</div>`)}
        <div class="cell on" style="width:37px">${icons.pin}</div>
        <div class="combo">${dd}</div>
        <div class="cell" style="width:36px">${sep}</div>
        <div class="cell" style="width:18px">${icons.cards}</div>
        <div class="cell" style="width:26px">${dd}</div>
        <div class="cell" style="width:26px">${icons.present}</div>
        <div class="cell" style="width:32px">${sep}</div>
      </div>

      <div class="main">
        <div class="data">
          <div class="dtabs">
            <div class="dtab">데이터</div>
            <div class="dtab off">분석<i class="chev"></i></div>
          </div>
          <div class="source">
            <svg width="17" height="18" viewBox="0 0 17 18" fill="none" stroke="#777"><ellipse cx="6.5" cy="3.5" rx="5.5" ry="2.5"/><path d="M1 3.5v9c0 1.5 2 2.5 5 2.5M12 3.5v5"/><path d="M1 8c0 1.5 2 2.5 5.5 2.5"/><circle cx="12.5" cy="13.5" r="3.5" fill="#3f8fb5" stroke="none"/></svg>
            Sheet1(2021 특구통계 샘...
          </div>
          <div class="searchrow">
            <div class="search">검색
              <svg width="13" height="13" viewBox="0 0 13 13" fill="none" stroke="#555"><circle cx="8" cy="5" r="4"/><path d="M5 8l-4 4"/></svg>
            </div>
            <svg style="margin-left:5px" width="14" height="14" viewBox="0 0 14 14" fill="none" stroke="#555"><path d="M1 1.5h12L8.5 7v6L5.5 11.5V7z"/></svg>
            <i class="vb"></i>
            <svg width="13" height="10"><path d="M0 1h13M0 3.5h13M0 6h13M0 8.5h13" stroke="#777" stroke-dasharray="2 1"/></svg>
            <i class="dd" style="margin-left:10px"></i>
          </div>
          <div class="tblhead">테이블</div>
          ${dims.map((f) => this.field(f))}
          <div class="divider"></div>
          ${measures.map((f) => this.field(f))}
        </div>

        <div class="cards">
          <div class="card" style="height:71px"><h4>페이지</h4></div>
          <div class="card filter" style="height:93px"><h4>필터</h4><div class="pill g">경도(생성됨)</div></div>
          <div class="card" style="height:347px">
            <h4>마크</h4>
            <div class="mkcombo"><i class="ring"></i>자동<span class="end">${dd}</span></div>
            <div class="mkbtns">
              <div class="mkbtn">${colorIcon}색상</div>
              <div class="mkbtn">${sizeIcon}크기</div>
              <div class="mkbtn"><svg width="17" height="16"><rect x=".5" y=".5" width="16" height="14" fill="none" stroke="#777" stroke-width="1.4"/><text x="8.5" y="12" font-size="11" text-anchor="middle" fill="#666" font-family="Liberation Serif" font-weight="700">T</text></svg>레이블</div>
              <div class="mkbtn">세부<br />정보</div>
              <div class="mkbtn">도구<br />설명</div>
            </div>
            <div class="mkpills">
              <div class="mkrow"><span class="slot">${colorIcon}</span><div class="pill b">${pill}</div></div>
              <div class="mkrow"><span class="slot">${sizeIcon}</span><div class="pill g">합계(근로자(명))</div></div>
              <div class="mkrow"><span class="slot">${detailIcon}</span><div class="pill b">${pill}</div></div>
              <div class="mkrow"><span class="slot">${detailIcon}</span><div class="pill b">${pill}</div></div>
            </div>
          </div>
        </div>

        <div class="work">
          <div class="shelf"><div class="lab"><svg width="12" height="12"><path d="M1.5 1v10M6 1v10M10.5 1v10" stroke="#555" stroke-width="1.5"/></svg>열</div><div class="pill g">경도(생성됨)</div></div>
          <div class="shelf"><div class="lab"><svg width="12" height="12"><path d="M3.5 2h8M3.5 6h8M3.5 10h8M0 2h2M0 6h2M0 10h2" stroke="#555" stroke-width="1.5"/></svg>행</div><div class="pill g">위도(생성됨)</div></div>
          <div class="view">
            <div class="vtitle">지역별 근로자 수 현황</div>
            <div class="mapbox">
              ${this.map()}
              <div class="copy">© 2023 Mapbox © OpenStreetMap</div>
              <div class="mapctl">
                <div class="ctlbox s"><svg width="14" height="14" viewBox="0 0 13 13" fill="none" stroke="#555"><circle cx="8" cy="5" r="4"/><path d="M5 8l-4 4"/></svg></div>
                <div class="ctlbox g">
                  <div class="cb bd"><svg width="12" height="12"><path d="M6 1v10M1 6h10" stroke="#555" stroke-width="2"/></svg></div>
                  <div class="cb" style="margin-top:3px"><svg width="12" height="12"><path d="M1 6h10" stroke="#555" stroke-width="2"/></svg></div>
                  <div class="cb act" style="margin-top:3px"><svg width="20" height="20" viewBox="0 0 24 24" fill="none">${pinPath}${xmark(18, 19, 3.5)}</svg></div>
                  <hr />
                  <i class="play"></i>
                </div>
              </div>
            </div>
          </div>
        </div>
      </div>

      <div class="tabs">
        <div class="tab ds"><svg width="10" height="13" fill="none" stroke="#666"><rect x="1" y="1" width="8" height="11" rx="3"/><path d="M1 4.5h8"/></svg>데이터 원본</div>
        <div class="tab on">지역별 근로자 수 현황</div>
        <div class="tab add">${ico(18, svg`<rect x="3" y="4" width="14" height="13" stroke-width="1.1"/><path d="M8 14v-3M11 14V8M14 14v-4"/><path d="M18 13v9M14 18h8" stroke="#555" stroke-width="2"/>`)}</div>
        <div class="tab add">${ico(18, svg`<rect x="3" y="4" width="14" height="13" stroke-width="1.1"/><path d="M10 4v13M3 10h14"/><path d="M18 13v9M14 18h8" stroke="#555" stroke-width="2"/>`)}</div>
        <div class="tab add">${ico(18, svg`<path d="M3 5l5 1 4-2 5 2v11l-5-2-4 2-5-2z" stroke-width="1.1"/><path d="M18 13v9M14 18h8" stroke="#555" stroke-width="2"/>`)}</div>
      </div>
      <div class="status">
        <span style="margin-left:4px;width:90px">18개 마크</span>
        <span style="width:131px">행 1개 &nbsp;&nbsp;x &nbsp;&nbsp;열 1개</span>
        <span style="width:1276px">합계(근로자(명)): 138,447</span>
        <div class="stcell" style="width:156px"></div>
        <div class="stcell" style="width:32px"></div>
        <div class="stcell" style="width:32px"></div>
        <div class="stcell" style="width:57px"></div>
        <div class="stcell" style="width:72px;padding:0 6px"><i class="nav"></i><i class="nav"></i><i class="nav r"></i><i class="nav r"></i></div>
        <div class="stcell" style="width:69px;padding:0 4px">
          <svg width="12" height="12"><path d="M0 2h12M0 6h12M0 10h12" stroke="#bbb" stroke-width="3" stroke-dasharray="3 1.5"/></svg>
          <svg width="12" height="12"><rect width="12" height="7" fill="#bbb"/><path d="M0 10.5h12" stroke="#bbb" stroke-width="3" stroke-dasharray="3 1.5"/></svg>
          <svg width="12" height="12"><rect width="12" height="12" fill="#666"/></svg>
        </div>
      </div>

      <div class="showme">
        <div class="smtab">
          <svg width="14" height="15"><rect y="0" width="11" height="3" fill="#7b6294"/><rect y="4" width="14" height="3" fill="#84a8cd"/><rect y="8" width="5" height="3" fill="#f0a878"/><rect y="12" width="8" height="3" fill="#f0677c"/></svg>
          표현 방식
        </div>
        <div class="smbody">
          <div class="smgrid">
            ${thumbs.map((t, i) => html`<div class="thumb ${i === ACTIVE ? "sel" : ""}"><svg viewBox="0 0 68 51">${t}</svg></div>`)}
          </div>
          <div class="smhead">기호 맵의 경우 다음 시도:</div>
          <div class="smrow">1개의 지오 ${globe("#666", 12)}<div class="pill b" style="width:60px">차원</div></div>
          <div class="smrow">0개 이상의<div class="pill b" style="width:60px">차원</div></div>
          <div class="smrow">0~2개의<div class="pill g" style="width:75px">측정값</div></div>
          <div class="smnote">지오 차원 대신 공간 측정값을<br />사용할 수 있습니다.</div>
        </div>
      </div>
    `;
  }
}
